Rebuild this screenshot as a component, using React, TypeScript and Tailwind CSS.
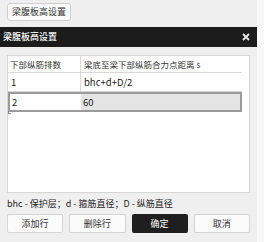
const font = "font-['Noto_Sans_CJK_SC','Noto_Sans',sans-serif]";

const btn =
	'h-[19px] rounded-[2px] border border-[#d4d4d4] bg-[#fbfbfb] text-[9px] text-[#333] flex items-center justify-center';

export default function App() {
	return (
		<div className={`flex h-[242px] w-[264px] bg-[#f8f8f8] ${font}`}>
			<div className="flex w-[257px] flex-col bg-[#efefef]">
				<div className="flex h-[27px] items-start px-[7px] pt-[3px]">
					<button className="flex h-[18px] w-[64px] items-center justify-center rounded-[3px] border border-[#d0d0d0] bg-[#fafafa] text-[9px] text-[#333]">
						梁腹板高设置
					</button>
				</div>
				<div className="flex h-[20px] items-center justify-between bg-[#1c1c1c] pl-[3px] pr-[7px] text-white">
					<span className="text-[9px] font-medium">梁腹板高设置</span>
					<svg width="8" height="8" viewBox="0 0 8 8">
						<path d="M1 1L7 7M7 1L1 7" stroke="#e8e8e8" strokeWidth="1.8" />
					</svg>
				</div>
				<div className="px-[7px] pt-[8px]">
					<div className="h-[138px] border border-[#d6d6d6] bg-white">
						<div className="w-[234px] text-[#222]">
							<div className="flex h-[17px] border-b border-[#d8d8d8] text-[8.5px] text-[#333]">
								<div className="flex w-[73px] items-center border-r border-[#d8d8d8] pl-[2px]">
									下部纵筋排数
								</div>
								<div className="flex flex-1 items-center pl-[3px]">梁底至梁下部纵筋合力点距离 s</div>
							</div>
							<div className="flex h-[19px] border-b border-[#d8d8d8] text-[9.5px]">
								<div className="flex w-[73px] items-center border-r border-[#d8d8d8] pl-[3px]">1</div>
								<div className="flex flex-1 items-center pl-[3px]">bhc+d+D/2</div>
							</div>
							<div className="relative flex h-[20px] border-2 border-[#9a9a9a] text-[9.5px]">
								<div className="flex w-[71px] items-center bg-white pl-[2px]">2</div>
								<div className="flex flex-1 items-center bg-[#e4e4e4] pl-[2px]">60</div>
								<span className="absolute bottom-[-4px] left-[-2px] h-[3px] w-[3px] border-b border-l border-[#888]" />
							</div>
						</div>
					</div>
					<div className="flex h-[21px] items-center text-[9px] text-[#1e1e1e]">
						bhc - 保护层；d - 箍筋直径；D - 纵筋直径
					</div>
					<div className="grid grid-cols-4 gap-[6px]">
						<button className={btn}>添加行</button>
						<button className={btn}>删除行</button>
						<button className="flex h-[19px] items-center justify-center rounded-[2px] bg-[#1f1f1f] text-[9px] text-white">
							确定
						</button>
						<button className={btn}>取消</button>
					</div>
				</div>
			</div>
		</div>
	);
}
